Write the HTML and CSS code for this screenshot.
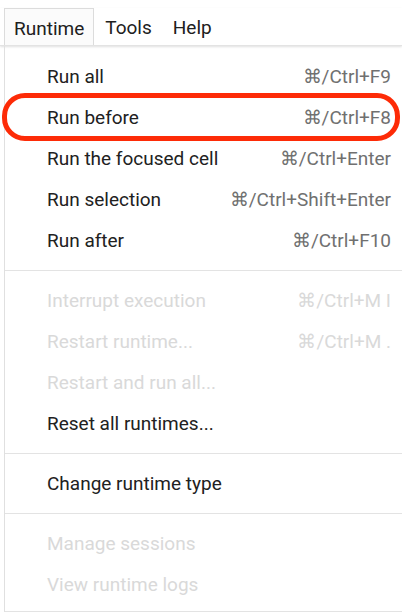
FILE: index.html
```html
<!DOCTYPE html>
<html>
<head>
<meta charset="utf-8">
<link rel="stylesheet" href="styles.css">
</head>
<body>
<div class="menubar">
  <div class="tab active">Runtime</div>
  <div class="tab">Tools</div>
  <div class="tab">Help</div>
</div>
<div class="menu">
  <div class="item"><span>Run all</span><span class="key">⌘/Ctrl+F9</span></div>
  <div class="item highlighted"><span>Run before</span><span class="key">⌘/Ctrl+F8</span><div class="ring"></div></div>
  <div class="item"><span>Run the focused cell</span><span class="key">⌘/Ctrl+Enter</span></div>
  <div class="item"><span>Run selection</span><span class="key">⌘/Ctrl+Shift+Enter</span></div>
  <div class="item"><span>Run after</span><span class="key">⌘/Ctrl+F10</span></div>
  <div class="sep"></div>
  <div class="item disabled"><span>Interrupt execution</span><span class="key">⌘/Ctrl+M I</span></div>
  <div class="item disabled"><span>Restart runtime...</span><span class="key">⌘/Ctrl+M .</span></div>
  <div class="item disabled"><span>Restart and run all...</span></div>
  <div class="item"><span>Reset all runtimes...</span></div>
  <div class="sep"></div>
  <div class="item"><span>Change runtime type</span></div>
  <div class="sep"></div>
  <div class="item disabled"><span>Manage sessions</span></div>
  <div class="item disabled"><span>View runtime logs</span></div>
  <div class="bottom"></div>
</div>
</body>
</html>
```
FILE: styles.css
```css
html, body {
  margin: 0;
  padding: 0;
  background: #fff;
}
body {
  font-family: Roboto, "Liberation Sans", sans-serif;
  font-size: 19px;
  color: #212121;
  width: 402px;
  height: 613px;
  overflow: hidden;
}
.menubar {
  display: flex;
  align-items: stretch;
  height: 37px;
  margin-top: 8px;
  padding-left: 4px;
  box-shadow: 0 1px 2px rgba(0,0,0,0.12);
  border-bottom: 1px solid #e3e3e3;
}
.tab {
  display: flex;
  align-items: center;
  padding: 2px 10px 0 10px;
  color: #202020;
}
.tab.active {
  background: #fbfbfb;
  border: 1px solid #dcdcdc;
  border-bottom: none;
  padding-left: 9px;
  padding-right: 9px;
}
.tab + .tab {
  padding-left: 11px;
}
.menu {
  margin-left: 4px;
  border-left: 1px solid #e0e0e0;
  padding-top: 10px;
}
.item {
  position: relative;
  height: 41px;
  display: flex;
  align-items: center;
  justify-content: space-between;
  padding-left: 42px;
  padding-right: 11px;
}
.key {
  color: #707070;
}
.disabled, .disabled .key {
  color: #d9d9d9;
}
.sep {
  height: 1px;
  background: #e3e3e3;
  margin: 9px 0 9px 0;
}
.bottom {
  height: 1px;
  background: #e3e3e3;
  margin-top: 6px;
}
.ring {
  position: absolute;
  left: -3px;
  right: 2px;
  top: -4px;
  bottom: -3px;
  border: 5px solid #fd2b07;
  border-radius: 23px;
}
```
